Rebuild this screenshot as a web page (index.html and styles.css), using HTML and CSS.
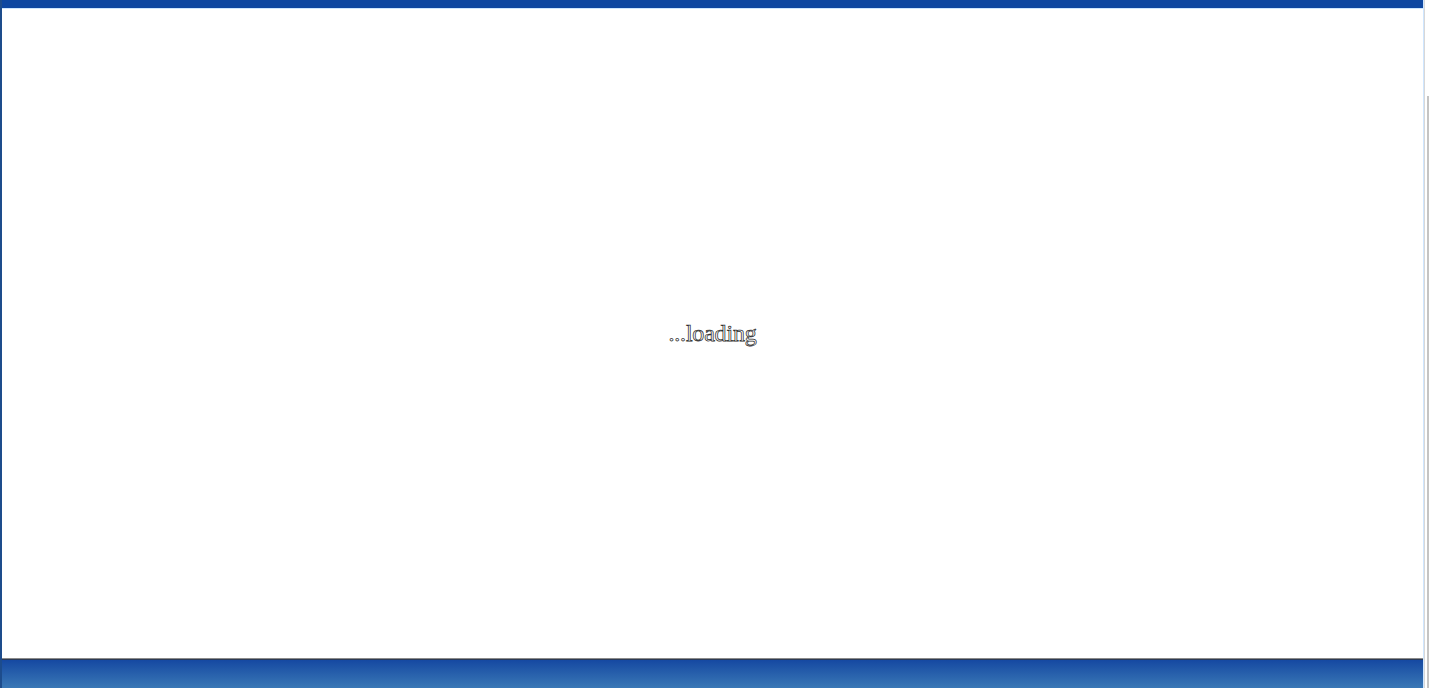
FILE: index.html
```html
<!DOCTYPE html>
<html>
<head>
<meta charset="utf-8">
<link rel="stylesheet" href="styles.css">
</head>
<body>
<div class="frame">
  <div class="main">
    <div class="topbar"></div>
    <div class="content">
      <div class="loading">...loading</div>
    </div>
    <div class="bottombar"></div>
  </div>
  <div class="scrollcol"><div class="thumb"></div></div>
</div>
</body>
</html>
```

FILE: styles.css
```css
html, body {
  margin: 0;
  padding: 0;
  height: 100%;
  overflow: hidden;
  background: #ffffff;
}
.frame {
  display: flex;
  height: 688px;
  width: 1430px;
}
.main {
  flex: 0 0 1424px;
  display: flex;
  flex-direction: column;
  border-left: 2px solid #1d4c8c;
  box-sizing: border-box;
  border-right: 1px solid #cfe6ff;
}
.topbar {
  height: 8px;
  background: #0e47a1;
  border-bottom: 1px solid #cde6ff;
}
.content {
  flex: 1;
  display: flex;
  align-items: center;
  justify-content: center;
  background: #ffffff;
}
.loading {
  font-family: "Liberation Serif", "Times New Roman", serif;
  font-size: 24px;
  color: #ffffff;
  -webkit-text-stroke: 0.75px #2e2e2e;
  letter-spacing: -0.2px;
  margin-top: -1px;
}
.bottombar {
  height: 29px;
  border-top: 1px solid #8a8a8a;
  box-shadow: inset 0 1px 0 #2c3a55;
  background: linear-gradient(#1447a1, #3a78b6);
}
.scrollcol {
  flex: 1;
  background: #ffffff;
  border-left: 1px solid #d8d8d8;
  position: relative;
}
.thumb {
  position: absolute;
  top: 96px;
  right: 1px;
  width: 2px;
  bottom: 0;
  background: #c4c4c4;
}
```
